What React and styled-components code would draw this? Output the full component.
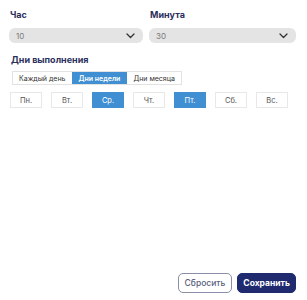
import React, { useState } from 'react';
import styled, { createGlobalStyle } from 'styled-components';

const GlobalStyle = createGlobalStyle`
  body {
    margin: 0;
    background: #ffffff;
    font-family: Inter, "Noto Sans", sans-serif;
  }
`;

const Page = styled.div`
  display: flex;
  flex-direction: column;
  height: 300px;
  box-sizing: border-box;
  padding: 9px 11px 7px 9px;
`;

const Row = styled.div`
  display: grid;
  grid-template-columns: 134px 147px;
  column-gap: 6px;
`;

const Field = styled.div`
  display: flex;
  flex-direction: column;
`;

const Label = styled.div`
  font-size: 9px;
  font-weight: 700;
  color: #2b2f5c;
  line-height: 12px;
  padding-left: 1px;
  margin-bottom: ${(p) => p.$gap || 7}px;
`;

const Select = styled.div`
  display: flex;
  align-items: center;
  justify-content: space-between;
  height: 15px;
  border-radius: 6px;
  background: #e4e4e4;
  padding: 0 8px 0 7px;
  font-size: 8px;
  color: #7a7a7a;
`;

const Section = styled.div`
  margin-top: 11px;
  padding-left: 1px;
`;

const Tabs = styled.div`
  display: flex;
  width: fit-content;
  border: 1px solid #e2e2e2;
  height: 14px;
  box-sizing: border-box;
  margin-left: 2px;
`;

const Tab = styled.div`
  display: flex;
  align-items: center;
  padding: 0 ${(p) => p.$px}px;
  font-size: 7px;
  color: ${(p) => (p.$active ? '#ffffff' : '#333333')};
  background: ${(p) => (p.$active ? '#3f8fd2' : '#ffffff')};
  font-weight: ${(p) => (p.$active ? 600 : 400)};
`;

const Days = styled.div`
  display: flex;
  gap: 9px;
  margin-top: 7px;
`;

const Day = styled.div`
  width: 32px;
  height: 16px;
  box-sizing: border-box;
  display: flex;
  align-items: center;
  justify-content: center;
  font-size: 7.5px;
  border: 1px solid ${(p) => (p.$active ? '#3f8fd2' : '#e8e8e8')};
  background: ${(p) => (p.$active ? '#3f8fd2' : '#ffffff')};
  color: ${(p) => (p.$active ? '#ffffff' : '#555555')};
`;

const Footer = styled.div`
  margin-top: auto;
  display: flex;
  justify-content: flex-end;
  gap: 5px;
`;

const Button = styled.button`
  height: 20px;
  box-sizing: border-box;
  border-radius: 5px;
  padding: 0 ${(p) => (p.$primary ? 5 : 6)}px;
  font-family: Inter, "Noto Sans", sans-serif;
  font-size: 8.5px;
  font-weight: ${(p) => (p.$primary ? 700 : 500)};
  border: 1px solid ${(p) => (p.$primary ? '#1f2a6f' : '#8a8ea8')};
  background: ${(p) => (p.$primary ? '#1f2a6f' : '#ffffff')};
  color: ${(p) => (p.$primary ? '#ffffff' : '#5a5f7e')};
  cursor: pointer;
`;

const Chevron = () => (
  <svg width="9" height="6" viewBox="0 0 9 6" fill="none">
    <path d="M1 1l3.5 3.5L8 1" stroke="#333" strokeWidth="1.3" strokeLinecap="round" strokeLinejoin="round" />
  </svg>
);

const days = ['Пн.', 'Вт.', 'Ср.', 'Чт.', 'Пт.', 'Сб.', 'Вс.'];

export default function App() {
  const [active] = useState(['Ср.', 'Пт.']);
  return (
    <>
      <GlobalStyle />
      <Page>
        <Row>
          <Field>
            <Label>Час</Label>
            <Select>
              <span>10</span>
              <Chevron />
            </Select>
          </Field>
          <Field>
            <Label>Минута</Label>
            <Select>
              <span>30</span>
              <Chevron />
            </Select>
          </Field>
        </Row>
        <Section>
          <Label $gap={5}>Дни выполнения</Label>
          <Tabs>
            <Tab $px={6}>Каждый день</Tab>
            <Tab $px={7} $active>Дни недели</Tab>
            <Tab $px={6}>Дни месяца</Tab>
          </Tabs>
          <Days>
            {days.map((d) => (
              <Day key={d} $active={active.includes(d)}>{d}</Day>
            ))}
          </Days>
        </Section>
        <Footer>
          <Button>Сбросить</Button>
          <Button $primary>Сохранить</Button>
        </Footer>
      </Page>
    </>
  );
}
